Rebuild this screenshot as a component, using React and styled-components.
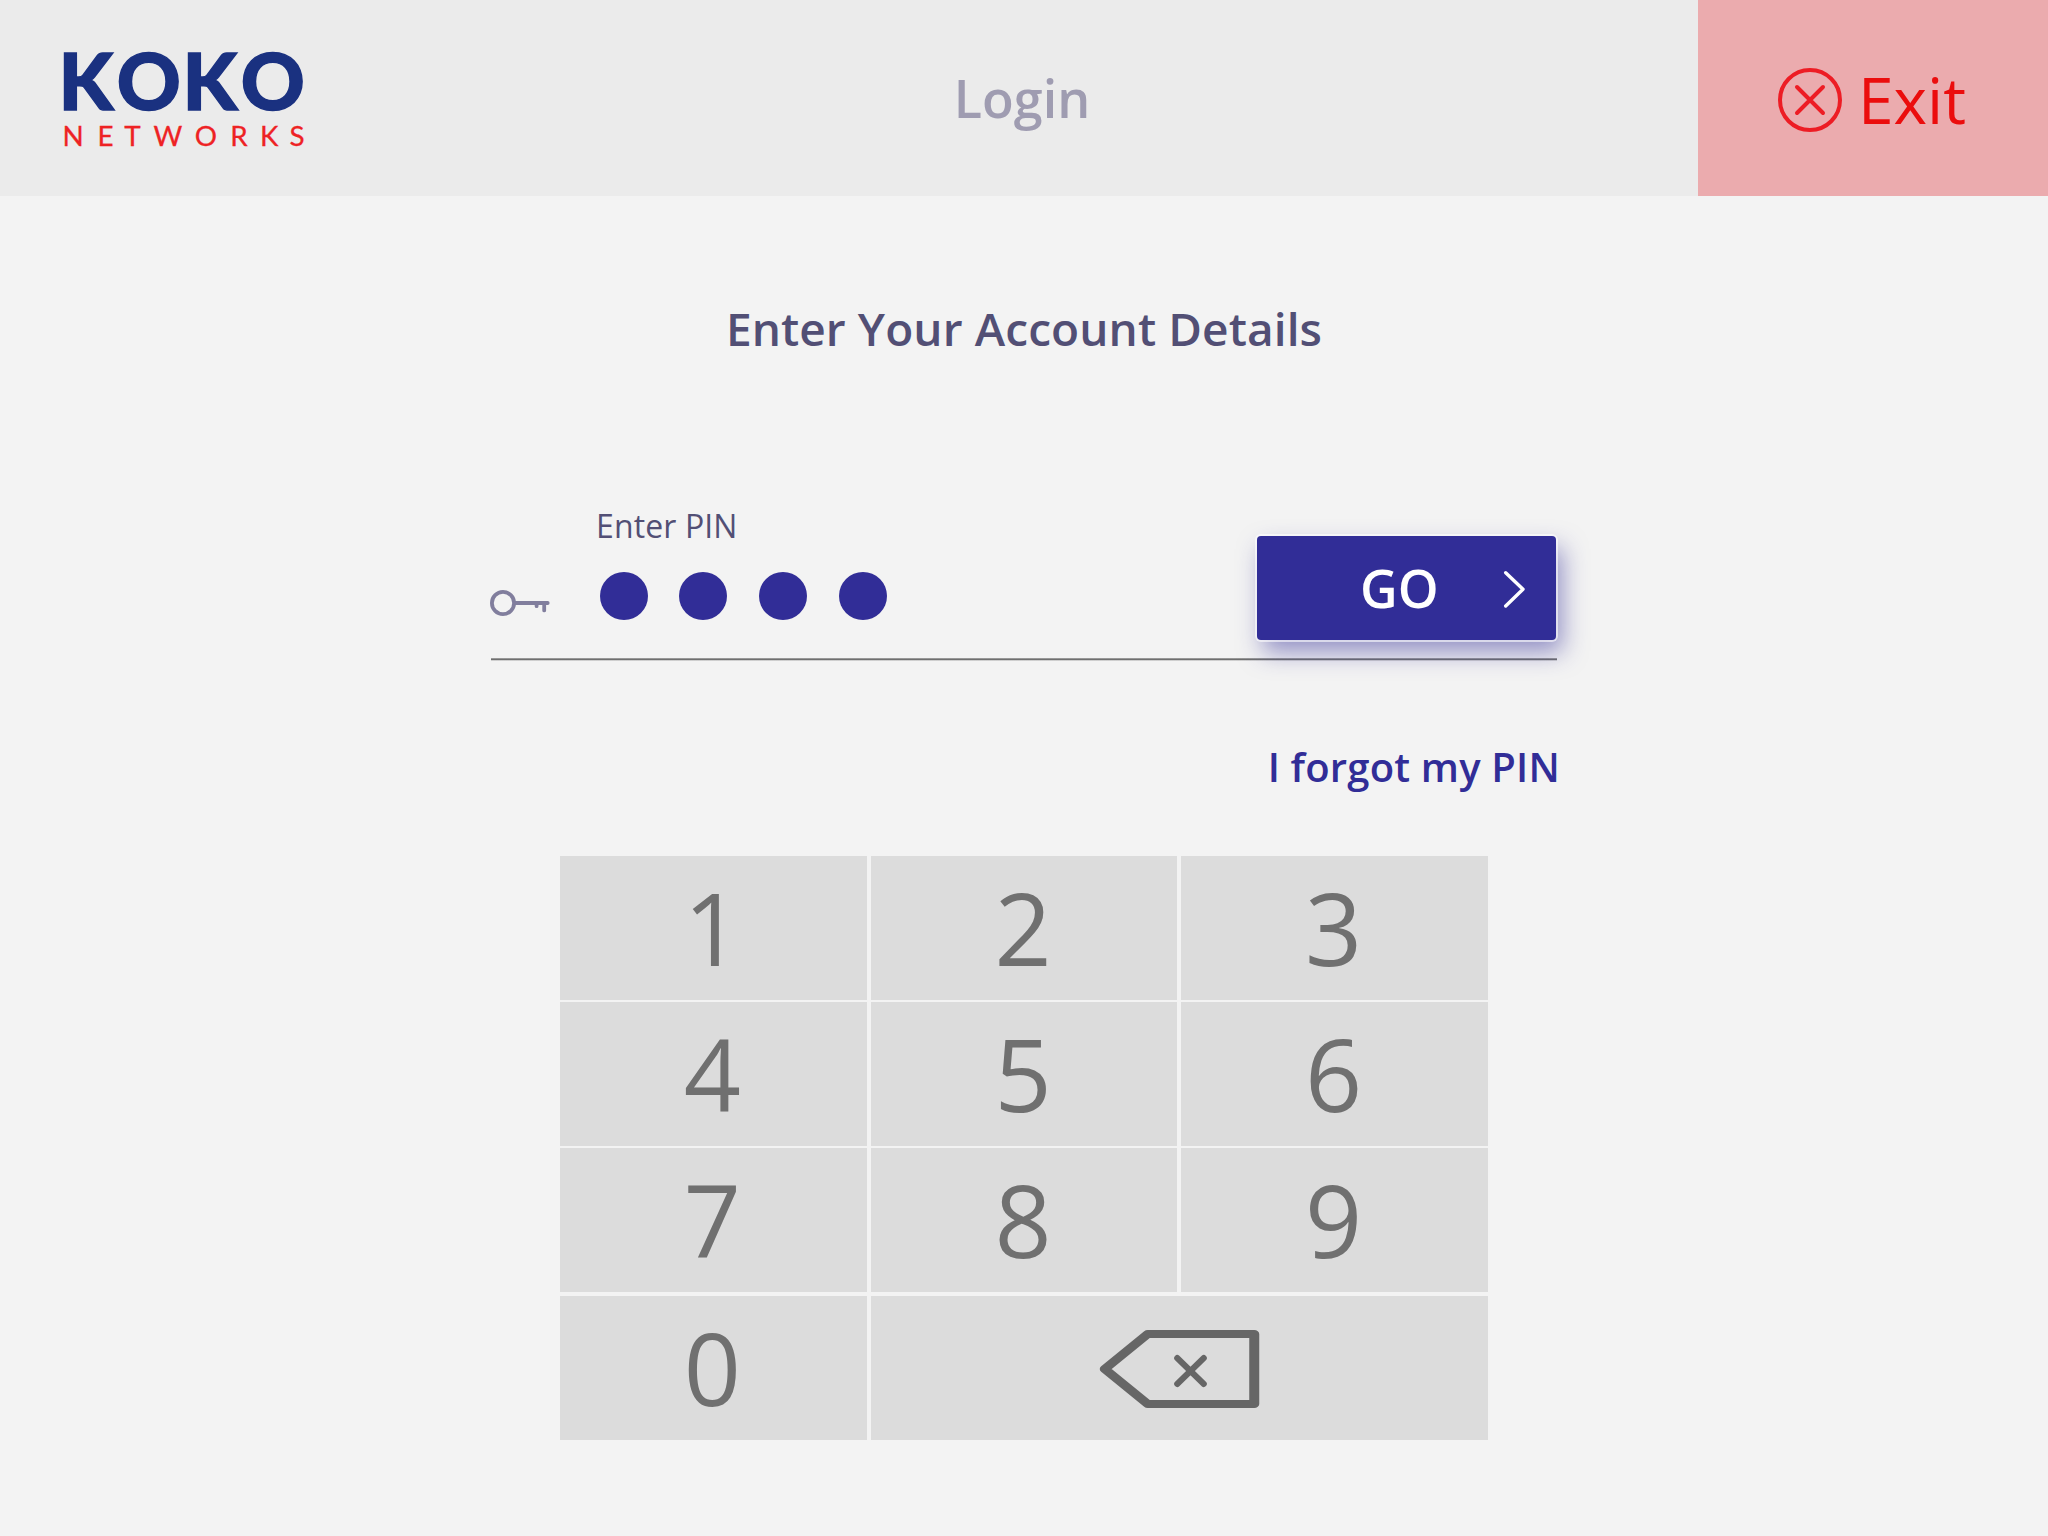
import React from "react";
import styled, { createGlobalStyle } from "styled-components";

const GlobalStyle = createGlobalStyle`
  *, *::before, *::after { box-sizing: border-box; }
  body {
    margin: 0;
    background: #f3f3f3;
    font-family: "Open Sans", "Noto Sans", sans-serif;
  }
  button { font: inherit; border: 0; padding: 0; cursor: pointer; }
`;

const Screen = styled.div`
  width: 2048px;
  height: 1536px;
  display: flex;
  flex-direction: column;
  background: #f3f3f3;
  overflow: hidden;
`;

const Header = styled.header`
  display: grid;
  grid-template-columns: 350px 1fr 350px;
  height: 196px;
  flex: none;
  background: #ebebeb;
`;

const LogoLink = styled.div`
  padding-left: 56px;
`;

const LogoSvg = styled.svg`
  display: block;
  font-family: Lato, sans-serif;
`;

const PageName = styled.h1`
  margin: 0;
  padding-right: 4px;
  display: flex;
  align-items: center;
  justify-content: center;
  font-size: 52px;
  font-weight: 600;
  line-height: 72px;
  color: #9f9cb1;
`;

const ExitButton = styled.button`
  display: flex;
  align-items: center;
  justify-content: center;
  gap: 16px;
  padding: 4px 2px 0 0;
  background: #ebabae;
  color: #eb0d0d;
  font-size: 64px;
  line-height: 88px;
`;

const Icon = styled.svg`
  display: block;
  flex: none;
  fill: none;
  stroke: ${(p) => p.$color};
  stroke-width: ${(p) => p.$stroke};
  stroke-linecap: round;
  stroke-linejoin: round;
`;

const Main = styled.main`
  display: flex;
  flex-direction: column;
  align-items: center;
  padding-top: 100px;
`;

const Title = styled.h2`
  margin: 0 0 144px;
  font-size: 46px;
  font-weight: 600;
  line-height: 64px;
  letter-spacing: 0.1px;
  color: #524f75;
`;

const Form = styled.form`
  width: 1066px;
`;

const FieldRow = styled.div`
  display: flex;
  height: 154px;
`;

const KeySlot = styled.div`
  width: 105px;
  padding-top: 84px;
  margin-left: -2px;
`;

const PinField = styled.div`
  flex: 1;
  display: flex;
  flex-direction: column;
  gap: 24px;
`;

const PinLabel = styled.label`
  padding-left: 2px;
  font-size: 32px;
  line-height: 44px;
  letter-spacing: 0.12px;
  color: #524f75;
`;

const PinDots = styled.div`
  display: flex;
  gap: 31.7px;
  padding-left: 5.6px;
`;

const Dot = styled.span`
  width: 48px;
  height: 48px;
  border-radius: 50%;
  background: #312d97;
`;

const GoButton = styled.button`
  display: flex;
  align-items: center;
  justify-content: space-between;
  width: 299px;
  height: 104px;
  margin: 32px 1px 0 0;
  padding: 0 31px 0 103px;
  border-radius: 4px;
  background: #312d97;
  color: #fff;
  font-size: 52px;
  font-weight: 600;
  line-height: 72px;
  box-shadow: 0 0 0 2px rgba(255, 255, 255, 0.6),
    6px 12px 24px rgba(49, 45, 151, 0.5);
`;

const Underline = styled.div`
  height: 3px;
  background: linear-gradient(
    rgba(60, 60, 60, 0.5) 1px,
    rgba(60, 60, 60, 0.72) 1px 2px,
    rgba(60, 60, 60, 0.2) 2px
  );
`;

const ForgotRow = styled.div`
  display: flex;
  justify-content: flex-end;
  margin: 78px -3px 61px 0;
`;

const ForgotLink = styled.a`
  font-size: 40px;
  font-weight: 600;
  line-height: 56px;
  letter-spacing: 0.18px;
  color: #312d97;
  white-space: nowrap;
`;

const Keypad = styled.div`
  display: flex;
  flex-direction: column;
  gap: 4px;
  width: 928px;
`;

const KeyGrid = styled.div`
  display: grid;
  grid-template-columns: repeat(3, 1fr);
  grid-auto-rows: 144px;
  gap: 2px 4px;
`;

const Key = styled.button`
  display: flex;
  align-items: center;
  justify-content: center;
  grid-column: span ${(p) => p.$span || 1};
  padding: ${(p) => (p.$icon ? "2px 0 0 1px" : "0 1.9px 2px 0")};
  background: #dcdcdc;
  color: #707070;
  font-size: 100px;
  line-height: 136px;
`;

function Logo() {
  return (
    <LogoSvg width="260" height="180" viewBox="56 0 260 180" role="img" aria-label="KOKO Networks">
      <text
        x="58.6 116.8 182.6 240.8"
        y="110"
        fontSize="79"
        fontWeight="900"
        fill="#1a3180"
        stroke="#1a3180"
        strokeWidth="1.4"
      >
        KOKO
      </text>
      <text
        x="62.6 97.4 124.2 153.6 194.8 230.2 260 289.4"
        y="145.5"
        fontSize="27.8"
        fill="#ee2224"
        stroke="#ee2224"
        strokeWidth="0.3"
      >
        NETWORKS
      </text>
    </LogoSvg>
  );
}

const ExitIcon = () => (
  <Icon width="64" height="64" viewBox="0 0 64 64" $color="#ed1c24" $stroke={4}>
    <circle cx="32" cy="32" r="30" />
    <path d="M19 19 45 45M45 19 19 45" />
  </Icon>
);

const KeyIcon = () => (
  <Icon width="62" height="30" viewBox="0 0 62 30" $color="#817e9d" $stroke={3.8}>
    <circle cx="14" cy="15" r="11.1" />
    <path d="M26 15H58.7M47.6 15v3.2M55.2 15v7.4" />
  </Icon>
);

const ChevronIcon = () => (
  <Icon width="24" height="40" viewBox="0 0 24 40" $color="#fff" $stroke={3.4}>
    <path d="M4.7 4.7 22 21.3 4.7 38" />
  </Icon>
);

const BackspaceOutline = styled.path`
  stroke-width: 8;
`;

const BackspaceIcon = () => (
  <Icon width="162" height="80" viewBox="0 0 162 80" $color="#666" $stroke={6}>
    <BackspaceOutline transform="scale(1.25 1)" d="M4.6 40 39 5H124.2V75H39Z" />
    <path d="M78.2 28 104.8 54M104.8 28 78.2 54" transform="translate(0 1)" />
  </Icon>
);

const DIGITS = [1, 2, 3, 4, 5, 6, 7, 8, 9];
const PIN_LENGTH = 4;

export default function App() {
  return (
    <Screen>
      <GlobalStyle />
      <Header>
        <LogoLink>
          <Logo />
        </LogoLink>
        <PageName>Login</PageName>
        <ExitButton type="button">
          <ExitIcon />
          Exit
        </ExitButton>
      </Header>
      <Main>
        <Title>Enter Your Account Details</Title>
        <Form onSubmit={(e) => e.preventDefault()}>
          <FieldRow>
            <KeySlot>
              <KeyIcon />
            </KeySlot>
            <PinField>
              <PinLabel>Enter PIN</PinLabel>
              <PinDots>
                {Array.from({ length: PIN_LENGTH }, (_, i) => (
                  <Dot key={i} />
                ))}
              </PinDots>
            </PinField>
            <GoButton type="submit">
              GO
              <ChevronIcon />
            </GoButton>
          </FieldRow>
          <Underline />
          <ForgotRow>
            <ForgotLink>I forgot my PIN</ForgotLink>
          </ForgotRow>
        </Form>
        <Keypad>
          <KeyGrid>
            {DIGITS.map((d) => (
              <Key key={d} type="button">
                {d}
              </Key>
            ))}
          </KeyGrid>
          <KeyGrid>
            <Key type="button">0</Key>
            <Key type="button" $span={2} $icon aria-label="Backspace">
              <BackspaceIcon />
            </Key>
          </KeyGrid>
        </Keypad>
      </Main>
    </Screen>
  );
}
